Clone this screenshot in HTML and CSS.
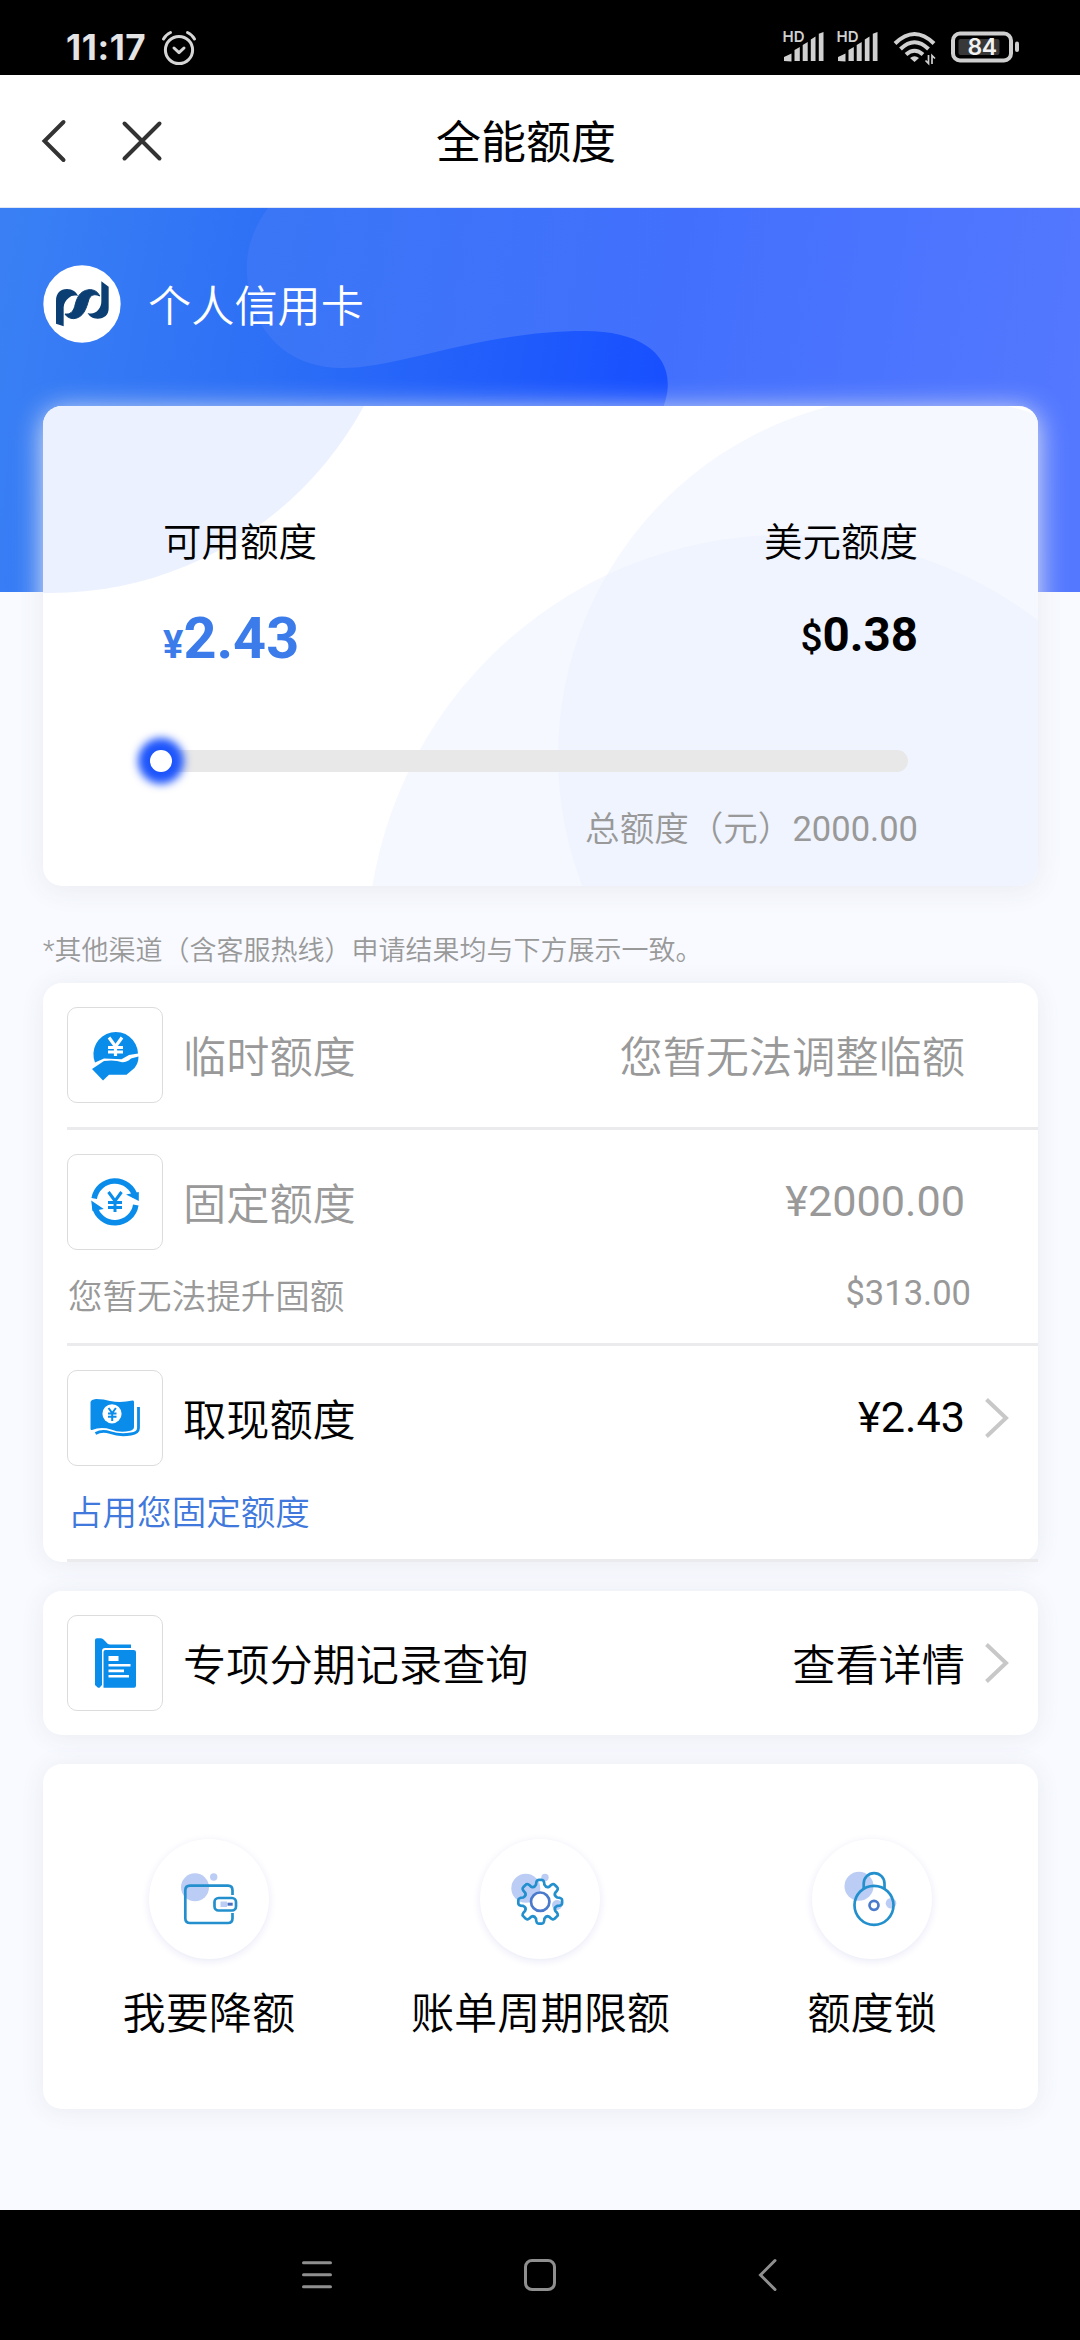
FILE: index.html
```html
<!DOCTYPE html>
<html lang="zh-CN">
<head>
<meta charset="utf-8">
<title>全能额度</title>
<link rel="stylesheet" href="styles.css">
</head>
<body>
<div class="statusbar">
  <div class="status-left">
    <span class="clock">11:17</span>
    <svg class="alarm" width="36" height="36" viewBox="0 0 36 36" fill="none" stroke="#d6d6d6" stroke-width="3" stroke-linecap="round" stroke-linejoin="round">
      <circle cx="18" cy="20" r="13.6"/><path d="M13 18l5 4.600 5-4.600"/><path d="M2.500 9q2.500-4.500 7-6.500M33.500 9q-2.500-4.500-7-6.500"/>
    </svg>
  </div>
  <div class="status-right">
    <svg class="signal" width="42" height="32" viewBox="0 0 42 32" fill="#d0d0d0">
      <text class="hd" x="0.500" y="12.300">HD</text>
      <path d="M2 31v-4l7.500-3.500v8zM12.500 31V20l5.300-3v14zM20.700 31V15l5-3v19zM28.800 31V9.500l4.700-3V31zM36.800 31V3.800L41.500 2v29z"/>
    </svg>
    <svg class="signal" width="42" height="32" viewBox="0 0 42 32" fill="#d0d0d0">
      <text class="hd" x="0.500" y="12.300">HD</text>
      <path d="M2 31v-4l7.500-3.500v8zM12.500 31V20l5.300-3v14zM20.700 31V15l5-3v19zM28.800 31V9.500l4.700-3V31zM36.800 31V3.800L41.500 2v29z"/>
    </svg>
    <svg class="wifi" width="44" height="36" viewBox="0 0 44 36" fill="none" stroke="#d0d0d0" stroke-width="4">
      <path d="M2 13.500Q21.500-5.500 41 13.500M7.500 19Q21.500 5.500 35.500 19M13 24.500q8.500-7.500 17 0"/>
      <path d="M21.500 32l-4.500-4q4.500-3.500 9 0z" fill="#d0d0d0" stroke="none"/>
      <path d="M35.500 25v8.500l-3-3M39 34v-8.500l3 3" stroke-width="1.700"/>
    </svg>
    <svg class="battery" width="70" height="32" viewBox="0 0 70 32">
      <rect x="2" y="2.500" width="58" height="27" rx="7" fill="none" stroke="#cfcfcf" stroke-width="4"/>
      <rect x="7.500" y="8" width="41" height="16" rx="2" fill="#383838"/>
      <path d="M64 12.500q0-2 2-2t2 2v6.500q0 2-2 2t-2-2z" fill="#cfcfcf"/>
      <text class="level" x="31" y="24">84</text>
    </svg>
  </div>
</div>

<header class="navbar">
  <svg class="nav-back" width="24" height="42" viewBox="0 0 24 42" fill="none" stroke="#333" stroke-width="4" stroke-linecap="round"><path d="M21.500 2L2.500 21l19 19"/></svg>
  <svg class="nav-close" width="40" height="42" viewBox="0 0 40 42" fill="none" stroke="#333" stroke-width="4" stroke-linecap="round"><path d="M2.500 3.500l35 35M37.500 3.500l-35 35"/></svg>
  <h1 class="nav-title">全能额度</h1>
</header>

<main class="page">
  <section class="hero">
    <svg class="hero-bg" width="1080" height="384" viewBox="0 0 1080 384">
      <defs>
        <linearGradient id="base" gradientUnits="userSpaceOnUse" x1="0" y1="60" x2="660" y2="170"><stop offset="0" stop-color="#3a80f4"/><stop offset=".42" stop-color="#2d6ff6"/><stop offset="1" stop-color="#1850ff"/></linearGradient>
        <linearGradient id="wave" gradientUnits="userSpaceOnUse" x1="250" y1="80" x2="1080" y2="200"><stop offset="0" stop-color="#3a76f6"/><stop offset=".5" stop-color="#4270fd"/><stop offset="1" stop-color="#5478ff"/></linearGradient>
      </defs>
      <rect width="1080" height="384" fill="url(#base)"/>
      <path d="M268 0C250 25 246 45 247 65C249 120 285 160 342 160C400 160 480 123 585 123C650 123 683 155 661 205V384H1080V0Z" fill="url(#wave)"/>
    </svg>
    <div class="owner">
      <svg class="logo" width="78" height="78" viewBox="0 0 234 234">
        <circle cx="117" cy="117" r="116" fill="#fff"/>
        <g transform="translate(-68 -75)" fill="#0b3f73">
          <path d="M107 251V182C107 160 120 147 140 147C157 147 168 156 173 168C163 165 152 167 145 174C135 182 131 190 130 202V259Z"/>
          <path stroke="#0b3f73" stroke-width="3" d="M134 222C150 224 158 215 163 200C168 178 176 152 206 149C222 148 233 156 238 168C222 160 210 165 205 180C198 205 190 233 160 236C148 236 138 230 134 222Z"/>
          <path d="M243 124L265 140V205C265 225 252 236 232 236C216 236 207 229 202 219C215 223 226 219 234 209C241 201 243 193 243 183Z"/>
        </g>
      </svg>
      <span class="owner-name">个人信用卡</span>
    </div>
  </section>

  <section class="quota">
    <svg class="quota-bg" width="995" height="480" viewBox="0 0 995 480">
      <defs><clipPath id="upper"><circle cx="876" cy="350" r="361"/></clipPath></defs>
      <circle cx="7" cy="-170" r="357" fill="#ebf1fe"/>
      <circle cx="876" cy="350" r="361" fill="#f5f8fe"/>
      <circle cx="742" cy="547" r="418" fill="#f5f8fe"/>
      <circle cx="742" cy="547" r="418" fill="#f0f4fe" clip-path="url(#upper)"/>
    </svg>
    <div class="quota-cols">
      <div class="quota-col">
        <span class="quota-label">可用额度</span>
        <span class="quota-cny"><small>¥</small>2.43</span>
      </div>
      <div class="quota-col quota-col-end">
        <span class="quota-label">美元额度</span>
        <span class="quota-usd"><small>$</small>0.38</span>
      </div>
    </div>
    <div class="track"><i class="thumb"></i></div>
    <p class="total">总额度（元）<span class="digits">2000.00</span></p>
  </section>

  <p class="notice">*其他渠道（含客服热线）申请结果均与下方展示一致。</p>

  <section class="panel list">
    <div class="item muted">
      <div class="row">
        <span class="icon"><svg width="96" height="96" viewBox="0 0 96 96" fill="#0a8dea">
          <path d="M28 55.500A22.300 22.300 0 1 1 71 46.500L62 48L54.500 52.300L37 51.500Z"/>
          <path d="M25 62L37 54Q48 52.500 55 55.300Q60 55.500 64 51.500L71.500 49.500Q71.500 56 67.500 61L59.500 67.700H42L36 73.500Z"/>
          <path d="M42 30.500l6.500 9 6.500-9M48.500 39v10M41 40.500h15M41 45h15" fill="none" stroke="#fff" stroke-width="3.200"/>
        </svg></span>
        <span class="name">临时额度</span><span class="value">您暂无法调整临额</span>
      </div>
    </div>
    <div class="item muted">
      <div class="row">
        <span class="icon"><svg width="96" height="96" viewBox="0 0 96 96" fill="#0a8dea">
          <path d="M27.200 44.500A21 21 0 0 1 68.300 43M68.800 51A21 21 0 0 1 27.600 52.500" fill="none" stroke="#0a8dea" stroke-width="5.600"/>
          <path d="M59 40.500L71.800 47V38zM24.200 46.500L36.800 55L25.500 57z"/>
          <path d="M41.500 38l6.500 9 6.500-9M48 46v12M41 48.500h14M41 53.500h14" fill="none" stroke="#0a8dea" stroke-width="3"/>
        </svg></span>
        <span class="name">固定额度</span><span class="value num">¥2000.00</span>
      </div>
      <div class="sub"><span>您暂无法提升固额</span><span class="sub-num">$313.00</span></div>
    </div>
    <div class="item">
      <div class="row">
        <span class="icon"><svg width="96" height="96" viewBox="0 0 96 96" fill="#0a8dea">
          <path d="M23.500 32Q24 29.500 29 29Q37 29 43 31Q54 33 65.500 30.500Q67 30 67 32V57Q67 60 62 61Q53 63 44 59.500Q34 56.500 25 60Q23.500 60.500 23.500 58.500Z"/>
          <circle cx="45" cy="43.800" r="9.600" fill="#fff"/>
          <path d="M41.500 38l3.700 5 3.700-5M45.200 42v9M41 43.500h8.500M41 46.800h8.500" fill="none" stroke="#0a8dea" stroke-width="2"/>
          <path d="M71.500 37V58Q71.500 63 64 64Q53 66 43 62.500Q35 60 28.500 63.500" fill="none" stroke="#0a8dea" stroke-width="2.800"/>
        </svg></span>
        <span class="name">取现额度</span><span class="value num">¥2.43</span>
        <svg class="arrow" width="24" height="40" viewBox="0 0 24 40" fill="none" stroke="#c8c8c8" stroke-width="4"><path d="M1.500 1.500L21 20L1.500 38.500"/></svg>
      </div>
      <div class="sub link"><span>占用您固定额度</span></div>
    </div>
  </section>

  <section class="panel record">
    <div class="row">
      <span class="icon"><svg width="96" height="96" viewBox="0 0 96 96" fill="#0a8dea">
        <path d="M28 25Q28 23.300 30 23.300H34Q36 23.500 38 26Q40.500 29.500 43 29.500H64V33H38Q35 33 35 36V70L32.500 72.700H31L28 70Z"/>
        <path d="M36.500 37Q36.500 35 38.500 35H66.500Q69 35 69 37V70.500Q69 72.700 67 72.700H36.500Z"/>
        <path d="M41.500 41h10v5h-10zM41.500 49h22v2.400h-22zM41.500 54.600h15.500v2.600H41.500zM41.500 60h20.500v2.600H41.500z" fill="#fff"/>
      </svg></span>
      <span class="name">专项分期记录查询</span><span class="value">查看详情</span>
      <svg class="arrow" width="24" height="40" viewBox="0 0 24 40" fill="none" stroke="#c8c8c8" stroke-width="4"><path d="M1.500 1.500L21 20L1.500 38.500"/></svg>
    </div>
  </section>

  <section class="panel actions">
    <div class="action">
      <span class="bubble"><svg width="120" height="120" viewBox="0 0 120 120" fill="none" stroke="#2390cd" stroke-width="2.700">
        <g fill="#bccdf5" stroke="none"><circle cx="46" cy="48.300" r="14"/><circle cx="64.700" cy="38" r="3.700"/><path d="M71.500 62.500h6.500v5.500h-6.500z"/></g>
        <path d="M83.500 56V51.500Q83.500 46.700 79 46.700H41Q36.300 46.700 36.300 51.500V79.300Q36.300 84 41 84H79Q83.500 84 83.500 79.300V74"/>
        <rect x="65.500" y="59" width="21.500" height="12.500" rx="4"/>
        <path d="M78.500 65.200h5.200" stroke="#4a6fc0" stroke-width="3"/>
      </svg></span>
      <span class="action-name">我要降额</span>
    </div>
    <div class="action">
      <span class="bubble"><svg width="120" height="120" viewBox="0 0 120 120" fill="none" stroke="#2390cd" stroke-width="2.700" stroke-linejoin="round">
        <g fill="#bccdf5" stroke="none"><circle cx="45.800" cy="49.300" r="14.500"/><circle cx="65" cy="38.500" r="3.700"/><circle cx="77" cy="66" r="5"/></g>
        <path transform="translate(60.200 62.700)" d="M-4.200-17Q-4-21.900-1.500-21.900H1.500Q4-21.900 4.200-17Q6-13.500 9-15Q12.700-18.900 14.400-17L17-14.400Q18.900-12.700 15-9Q13.500-6 17-4.200Q21.900-4 21.900-1.500V1.500Q21.900 4 17 4.200Q13.500 6 15 9Q18.900 12.700 17 14.400L14.400 17Q12.700 18.900 9 15Q6 13.500 4.200 17Q4 21.900 1.500 21.900H-1.500Q-4 21.900-4.200 17Q-6 13.500-9 15Q-12.700 18.900-14.400 17L-17 14.400Q-18.900 12.700-15 9Q-13.500 6-17 4.200Q-21.900 4-21.900 1.500V-1.500Q-21.900-4-17-4.200Q-13.500-6-15-9Q-18.900-12.700-17-14.400L-14.400-17Q-12.700-18.900-9-15Q-6-13.500-4.200-17Z"/>
        <circle cx="60.200" cy="62.700" r="9.200" fill="#fff" stroke="#4a7acb"/>
      </svg></span>
      <span class="action-name">账单周期限额</span>
    </div>
    <div class="action">
      <span class="bubble"><svg width="120" height="120" viewBox="0 0 120 120" fill="none" stroke="#2390cd" stroke-width="2.700">
        <g fill="#bccdf5" stroke="none"><circle cx="47" cy="47.300" r="14.500"/><circle cx="79" cy="64.300" r="5.300"/></g>
        <circle cx="62" cy="66.300" r="19.500"/>
        <path d="M51.700 50V44.500A10.400 10.400 0 0 1 72.500 44.500V50"/>
        <circle cx="62" cy="66.300" r="4.500" stroke="#4a7acb"/>
      </svg></span>
      <span class="action-name">额度锁</span>
    </div>
  </section>
</main>

<footer class="sysnav">
  <svg width="32" height="32" viewBox="0 0 32 32" fill="none" stroke="#8f8f8f" stroke-width="3" stroke-linecap="round"><path d="M2.500 3.700h27M2.500 15.700h27M2.500 27.700h27"/></svg>
  <svg width="32" height="32" viewBox="0 0 32 32" fill="none" stroke="#8f8f8f" stroke-width="3"><rect x="1.500" y="1.500" width="29" height="29" rx="6.500"/></svg>
  <svg width="32" height="32" viewBox="0 0 32 32" fill="none" stroke="#8f8f8f" stroke-width="3" stroke-linecap="round"><path d="M28 1.500L13.500 16L28 30.500"/></svg>
</footer>
</body>
</html>
```
FILE: styles.css
```css
* { box-sizing: border-box; margin: 0; padding: 0; }
body {
  width: 1080px;
  height: 2340px;
  display: flex;
  flex-direction: column;
  overflow: hidden;
  background: #f8faff;
  color: #000;
  font-family: Roboto, "Noto Sans CJK SC", sans-serif;
  font-size: 43.2px;
  font-weight: 350;
}
svg { display: block; flex: none; overflow: visible; }

.statusbar {
  height: 75px;
  background: #000;
  display: flex;
  justify-content: space-between;
  padding: 30px 59px 0 66px;
}
.status-left, .status-right { display: flex; }
.clock {
  width: 79px;
  font: 650 35px/35px Inter, sans-serif;
  letter-spacing: .6px;
  color: #e4e4e4;
  white-space: nowrap;
}
.alarm { margin-left: 16px; }
.signal { margin-right: 12px; }
.wifi { margin-left: 3px; }
.battery { margin: 1px 0 0 14px; }
.hd { font: 600 15px Inter, sans-serif; }
.level { font: 600 23px Inter, sans-serif; fill: #f2f2f2; text-anchor: middle; letter-spacing: -.5px; }

.navbar {
  height: 133px;
  background: #fff;
  display: grid;
  grid-template-columns: 80px 1fr 202px;
  align-items: center;
  padding-left: 42px;
  border-bottom: 1px solid #dfe6f4;
}
.nav-title {
  grid-row: 1;
  grid-column: 2 / 3;
  padding: 6px 0 0 52px;
  text-align: center;
  font-size: 45px;
  font-weight: 400;
  line-height: 66px;
}
.nav-back { grid-row: 1; grid-column: 1; }
.nav-close { grid-row: 1; grid-column: 2; }

.page { height: 2002px; display: flex; flex-direction: column; }
.hero { height: 384px; flex: none; position: relative; padding: 57px 43px; }
.hero-bg { position: absolute; inset: 0; }
.owner { position: relative; display: flex; align-items: center; gap: 27px; height: 78px; color: #fff; }
.owner-name { line-height: 60px; padding-top: 7px; }

.quota {
  position: relative;
  flex: none;
  width: 995px;
  height: 480px;
  margin: -186px 0 0 43px;
  padding: 109px 120px 0;
  background: #fff;
  border-radius: 19px;
  box-shadow: 0 4px 28px #e9ebf1;
}
.quota-bg { position: absolute; inset: 0; border-radius: 19px; overflow: hidden; }
.quota-cols { position: relative; display: flex; justify-content: space-between; }
.quota-col { display: flex; flex-direction: column; }
.quota-col-end { align-items: flex-end; }
.quota-label { font-size: 38.500px; line-height: 56px; }
.quota-cny { margin-top: 34px; font-size: 57.600px; font-weight: 700; line-height: 68px; color: #3b7bea; }
.quota-cny small { font-size: 38px; }
.quota-usd { margin-top: 32px; font-size: 47.500px; font-weight: 700; line-height: 64px; }
.quota-usd small { font-size: 38.800px; font-weight: 500; }
.track {
  position: relative;
  width: 758px;
  height: 22px;
  margin: 71px 0 0 -13px;
  border-radius: 11px;
  background: #e8e8e8;
}
.thumb {
  position: absolute;
  left: 0;
  top: 0;
  width: 22px;
  height: 22px;
  border-radius: 50%;
  background: #fff;
  box-shadow: 0 0 8px 12px #1e55fb;
}
.total { position: relative; margin-top: 32px; text-align: right; font-size: 34.560px; line-height: 50px; color: #999; }
.digits { font-weight: 400; }

.notice { flex: none; margin: 45px 43px 0; font-size: 27px; line-height: 40px; color: #999; }

.panel {
  flex: none;
  width: 995px;
  margin-left: 43px;
  background: #fff;
  border-radius: 19px;
  box-shadow: 0 2px 24px #e9ebf1;
}
.list { margin-top: 12px; }
.item { margin-left: 24px; padding-top: 24px; border-bottom: 3px solid #ebebed; }
.item:first-child { padding-bottom: 24px; }
.row { display: flex; align-items: center; height: 96px; padding-right: 73px; }
.icon { width: 96px; height: 96px; border: 1px solid #dcdcdc; border-radius: 10px; }
.icon svg { margin: -1px; }
.name { margin-left: 20px; padding-top: 7px; line-height: 62px; }
.value { margin-left: auto; padding-top: 7px; line-height: 62px; }
.value.num { padding-top: 0; font-weight: 400; }
.arrow { margin: 0 -44px 0 20px; }
.sub { height: 93px; display: flex; justify-content: space-between; padding: 22px 67px 0 1px; font-size: 34.560px; line-height: 50px; }
.sub-num { font-weight: 400; line-height: 43px; }
.muted { color: #999; }
.link { color: #4078dc; }

.record { margin-top: 29px; padding: 24px 0 24px 24px; }

.actions { margin-top: 29px; height: 345px; display: grid; grid-template-columns: repeat(3, 1fr); padding-top: 75px; }
.action { display: flex; flex-direction: column; align-items: center; }
.bubble { width: 120px; height: 120px; border-radius: 50%; background: #fff; box-shadow: 0 2px 9px #e8e8f7; }
.action-name { margin-top: 26px; line-height: 60px; }

.sysnav { flex: none; height: 130px; background: #000; display: flex; justify-content: space-between; padding: 49px 301px 0 301px; }
```
